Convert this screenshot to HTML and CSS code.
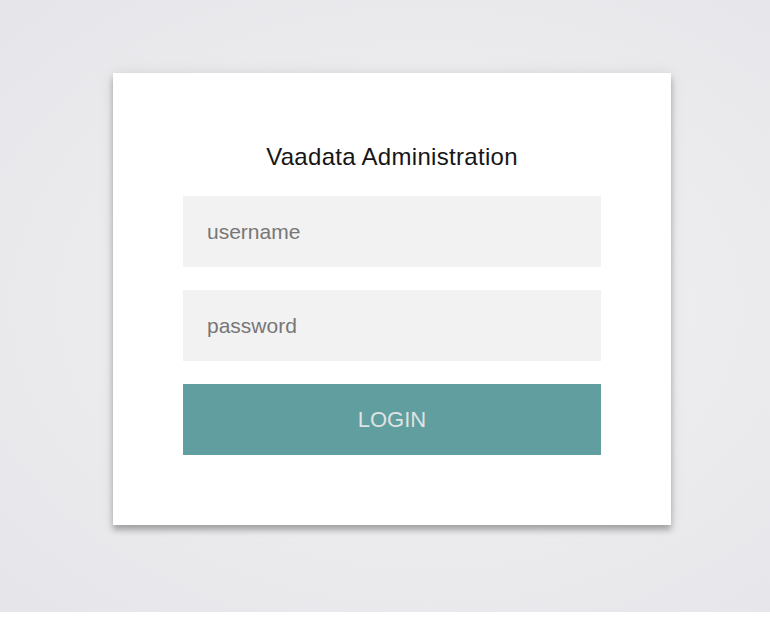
FILE: index.html
```html
<!DOCTYPE html>
<html>
<head>
<meta charset="utf-8">
<link rel="stylesheet" href="styles.css">
</head>
<body>
<div class="page">
  <main class="stage">
    <form class="card">
      <h1 class="title">Vaadata Administration</h1>
      <input class="field" type="text" placeholder="username">
      <input class="field" type="password" placeholder="password">
      <button class="login" type="button">LOGIN</button>
    </form>
  </main>
  <div class="footer-strip"></div>
</div>
</body>
</html>
```

FILE: styles.css
```css
html, body {
  margin: 0;
  padding: 0;
  height: 617px;
  overflow: hidden;
  background: #ffffff;
  font-family: "Liberation Sans", Arial, sans-serif;
}
.page {
  display: flex;
  flex-direction: column;
  height: 617px;
}
.stage {
  height: 612px;
  background: radial-gradient(ellipse at 55% 50%, #f1f1f3 0%, #ebebee 55%, #e6e6ea 100%);
  display: flex;
  justify-content: center;
  padding-top: 73px;
  padding-left: 14px;
  box-sizing: border-box;
}
.footer-strip {
  flex: 1;
  background: #ffffff;
}
.card {
  width: 558px;
  height: 452px;
  box-sizing: border-box;
  background: #ffffff;
  padding: 64px 70px 0 70px;
  display: flex;
  flex-direction: column;
  box-shadow: 0 5px 6px rgba(0, 0, 0, 0.28), 0 0 14px rgba(0, 0, 0, 0.08);
}
.title {
  margin: 0 0 20px 0;
  font-weight: normal;
  font-size: 24px;
  letter-spacing: 0.3px;
  line-height: 39px;
  text-align: center;
  color: #161616;
}
.field {
  height: 71px;
  border: none;
  outline: none;
  background: #f2f2f2;
  padding: 0 24px;
  margin: 0 0 23px 0;
  font-family: "Liberation Sans", Arial, sans-serif;
  font-size: 21px;
  color: #333;
  box-sizing: border-box;
}
.field::placeholder {
  color: #777777;
}
.login {
  height: 71px;
  border: none;
  background: #619e9f;
  color: #dfe3e3;
  font-family: "Liberation Sans", Arial, sans-serif;
  font-size: 22px;
  padding: 0;
}
```
